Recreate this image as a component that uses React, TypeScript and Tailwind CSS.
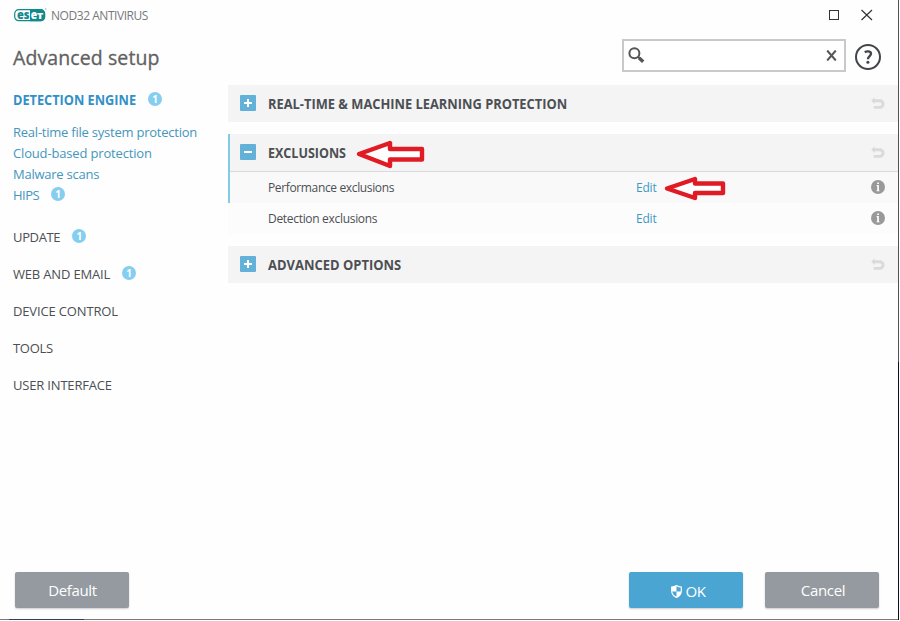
import React from "react";

const Badge = ({ className = "" }: { className?: string }) => (
  <span className={`relative -top-px flex h-[14px] w-[14px] items-center justify-center rounded-full bg-[#86cef0] text-[10px] leading-none font-bold text-white ${className}`}>
    1
  </span>
);

const Logo = () => (
  <svg width="33" height="14" viewBox="0 0 33 14" className="shrink-0">
    <rect x="0.7" y="1.7" width="30" height="11" rx="4" fill="#fff" stroke="#128a8c" strokeWidth="1.2" />
    <path d="M16 1.2H26.5a4.5 4.5 0 0 1 4.5 4.5v3a4.5 4.5 0 0 1-4.5 4.5H16z" fill="#128a8c" />
    <text x="3" y="10.8" fontSize="11.5" fontWeight="800" textLength="12.6" lengthAdjust="spacingAndGlyphs" fill="#128a8c">es</text>
    <text x="16.8" y="10.8" fontSize="11.5" fontWeight="800" textLength="6.4" lengthAdjust="spacingAndGlyphs" fill="#fff">e</text>
    <text x="23" y="10.8" fontSize="9" fontWeight="800" textLength="6.2" lengthAdjust="spacingAndGlyphs" fill="#fff">T</text>
    <circle cx="31.8" cy="1" r="0.7" fill="#7fbcbc" />
  </svg>
);

const Toggle = ({ open }: { open?: boolean }) => (
  <svg width="16" height="16" viewBox="0 0 16 16" className="mr-[12px] mb-[2px] shrink-0">
    <rect width="16" height="16" rx="1" fill="#63b1d8" />
    <path d={open ? "M4 8h8" : "M4 8h8M8 4v8"} stroke="#fff" strokeWidth="2" />
  </svg>
);

const Undo = () => (
  <svg width="14" height="13" viewBox="0 0 14 13" className="ml-auto">
    <path d="M2.5 3.8H8.8a3.2 3.2 0 0 1 0 6.6H2.8" fill="none" stroke="#dadada" strokeWidth="2.9" />
    <path d="M0.2 3.4L3.6 0.6V7Z" fill="#dadada" />
  </svg>
);

const Info = () => (
  <svg width="14" height="14" viewBox="0 0 14 14" className="mb-[2px] ml-auto">
    <circle cx="7" cy="7" r="7" fill="#999" />
    <path d="M6.2 2.5h1.7v1.6H6.2zM5.6 5.1H7.9v5.3H8.6v0.9H5.4v-0.9H6.2V6H5.6z" fill="#fff" />
  </svg>
);

const Section = ({ title, fit, open }: { title: string; fit: string; open?: boolean }) => (
  <div className={`flex h-[37px] items-center bg-[#f4f4f4] pr-[13px] ${open ? "pl-[10px]" : "pl-[12px]"}`}>
    <Toggle open={open} />
    <h2 className={`origin-left text-[14px] leading-[18px] font-bold whitespace-nowrap text-[#4c4f53] ${fit}`}>{title}</h2>
    <Undo />
  </div>
);

const Row = ({ label, tracking, className }: { label: string; tracking: string; className: string }) => (
  <div className={`flex items-center pr-[13px] text-[12px] leading-[16px] text-[#4c4f53] ${className}`}>
    <span className={`w-[368px] shrink-0 ${tracking}`}>{label}</span>
    <a className="tracking-[-0.2px] text-[#3c99c4]">Edit</a>
    <Info />
  </div>
);

const subItems = [
  { label: "Real-time file system protection", tracking: "tracking-[-0.23px]" },
  { label: "Cloud-based protection", tracking: "tracking-[-0.16px]" },
  { label: "Malware scans", tracking: "tracking-[-0.24px]" },
  { label: "HIPS", tracking: "tracking-[-0.5px]", badge: true },
];

const menu = [
  { label: "UPDATE", tracking: "tracking-[-0.35px]", badge: true },
  { label: "WEB AND EMAIL", tracking: "tracking-[-0.18px]", badge: true },
  { label: "DEVICE CONTROL", tracking: "tracking-[-0.15px]" },
  { label: "TOOLS", tracking: "tracking-[-0.3px]" },
  { label: "USER INTERFACE", tracking: "tracking-[-0.18px]" },
];

const buttonClass =
  "flex h-[36px] w-[114px] items-center justify-center rounded-[2px] text-[15px] tracking-[-0.35px] text-white shadow-[0_1px_2px_rgba(0,0,0,0.2)]";

export default function App() {
  return (
    <div className="h-[621px] w-[900px] bg-white font-['Open_Sans','Noto_Sans',sans-serif]">
      <div className="relative flex h-[620px] w-[899px] flex-col border-r border-b border-r-[#505458] border-b-[#777b7e] bg-[#fefefe]">
        <header className="flex h-[30px] shrink-0 items-center pl-[14px]">
          <Logo />
          <span className="mt-px ml-[4px] text-[12px] tracking-[-0.45px] whitespace-nowrap text-[#77797b]">NOD32 ANTIVIRUS</span>
          <svg width="44" height="12" viewBox="0 0 44 12" className="mr-[25px] ml-auto" fill="none" stroke="#333">
            <rect x="0.5" y="1.5" width="9" height="9" />
            <path d="M32.5 1L43 11M43 1L32.5 11" strokeWidth="1.2" />
          </svg>
        </header>

        <div className="flex h-[55px] shrink-0 items-center pr-[17px] pl-[13px]">
          <h1 className="text-[19.5px] leading-[28px] tracking-[0.1px] whitespace-nowrap text-[#616161] [-webkit-text-stroke:0.3px_#616161]">Advanced setup</h1>
          <div className="mb-[4px] ml-auto flex h-[33px] w-[224px] items-center justify-between border-2 border-[#c9c9c9] bg-white pr-[7px] pl-[4px]">
            <svg width="17" height="17" viewBox="0 0 17 17" fill="none" stroke="#555">
              <circle cx="6.4" cy="6.2" r="5" strokeWidth="2" />
              <path d="M10 9.8l2 2" strokeWidth="2" />
              <path d="M11.2 11l4 3.8" strokeWidth="3.4" />
            </svg>
            <svg width="11" height="11" viewBox="0 0 11 11" className="mb-px" fill="none" stroke="#555" strokeWidth="2">
              <path d="M1.2 0.5L9.8 10.5M9.8 0.5L1.2 10.5" />
            </svg>
          </div>
          <svg width="26" height="26" viewBox="0 0 26 26" className="mb-[2px] ml-[9px]" fill="none" stroke="#414549">
            <circle cx="13" cy="13" r="12" strokeWidth="2" />
            <path d="M9.8 8.2C11.5 7 16 6.8 16 9.8C16 12 12.9 12.2 12.9 15.2" strokeWidth="2.3" />
            <circle cx="12.9" cy="18.3" r="1.5" fill="#414549" stroke="none" />
          </svg>
        </div>

        <div className="flex min-h-0 flex-1">
          <nav className="w-[228px] shrink-0 pl-[13px] text-[13px] leading-[18px] whitespace-nowrap">
            <div className="flex h-[30px] items-center font-bold text-[#3390c6]">
              <span className="w-[123px] origin-left scale-x-[0.91] text-[14px]">DETECTION ENGINE</span>
              <Badge className="ml-[12px]" />
            </div>
            <ul className="mt-[6px] text-[#4596bd]">
              {subItems.map((item) => (
                <li key={item.label} className="flex h-[21px] items-center">
                  <span className={item.tracking}>{item.label}</span>
                  {item.badge && <Badge className="ml-[12px]" />}
                </li>
              ))}
            </ul>
            <ul className="mt-[13px] text-[#4c4f53]">
              {menu.map((item) => (
                <li key={item.label} className="flex h-[37px] items-center">
                  <span className={item.tracking}>{item.label}</span>
                  {item.badge && <Badge className="ml-[12px]" />}
                </li>
              ))}
            </ul>
          </nav>

          <main className="min-w-0 flex-1">
            <Section title="REAL-TIME & MACHINE LEARNING PROTECTION" fit="scale-x-[0.918]" />
            <div className="mt-[12px]">
              <div className="border-l-2 border-[#82cbe0]">
                <Section title="EXCLUSIONS" fit="scale-x-[0.895]" open />
                <Row label="Performance exclusions" tracking="tracking-[-0.36px]" className="h-[32px] border-t border-t-[#d9dadb] bg-[#f9f9f9] pl-[38px]" />
              </div>
              <Row label="Detection exclusions" tracking="tracking-[-0.31px]" className="h-[31px] bg-[#fcfcfc] pl-[40px]" />
            </div>
            <div className="mt-[12px]">
              <Section title="ADVANCED OPTIONS" fit="scale-x-[0.926]" />
            </div>
          </main>
        </div>

        <footer className="mb-[11px] flex shrink-0 items-center pr-[19px] pl-[15px]">
          <button className={`${buttonClass} bg-[#949a9f] pl-px`}>Default</button>
          <button className={`${buttonClass} mr-[22px] ml-auto gap-[3px] bg-[#4ba5d3] pt-[2px] pl-[5px]`}>
            <svg width="11" height="13" viewBox="0 0 11 13">
              <path d="M5.5 0.6Q7.5 2 10.3 2V6C10.3 9.3 8 11.3 5.5 12.4C3 11.3 0.7 9.3 0.7 6V2Q3.5 2 5.5 0.6Z" fill="#4ba5d3" stroke="#fff" strokeWidth="1.2" />
              <path d="M5.5 0.6V6.4H0.7V2Q3.5 2 5.5 0.6ZM5.5 6.4h4.8Q10 10.3 5.5 12.4Z" fill="#fff" />
            </svg>
            OK
          </button>
          <button className={`${buttonClass} bg-[#949a9f] pl-[2px]`}>Cancel</button>
        </footer>

        <svg width="70" height="30" viewBox="0 0 70 30" className="absolute top-[140px] left-[356px]" fill="#fff" stroke="#e01b25" strokeWidth="4.4" strokeLinejoin="round">
          <path d="M3 14L34 3V9H66V19.5H34V26Z" />
        </svg>
        <svg width="64" height="26" viewBox="0 0 64 26" className="absolute top-[176px] left-[664px]" fill="#fff" stroke="#e01b25" strokeWidth="4.4" strokeLinejoin="round">
          <path d="M3 12.5L31 3V7.5H59V17H31V22Z" />
        </svg>
        <div className="absolute top-[362px] -right-px h-[258px] w-px bg-[#07111c]" />
        <div className="absolute -bottom-px left-[9px] h-px w-[75px] bg-[#29425d]" />
      </div>
    </div>
  );
}
